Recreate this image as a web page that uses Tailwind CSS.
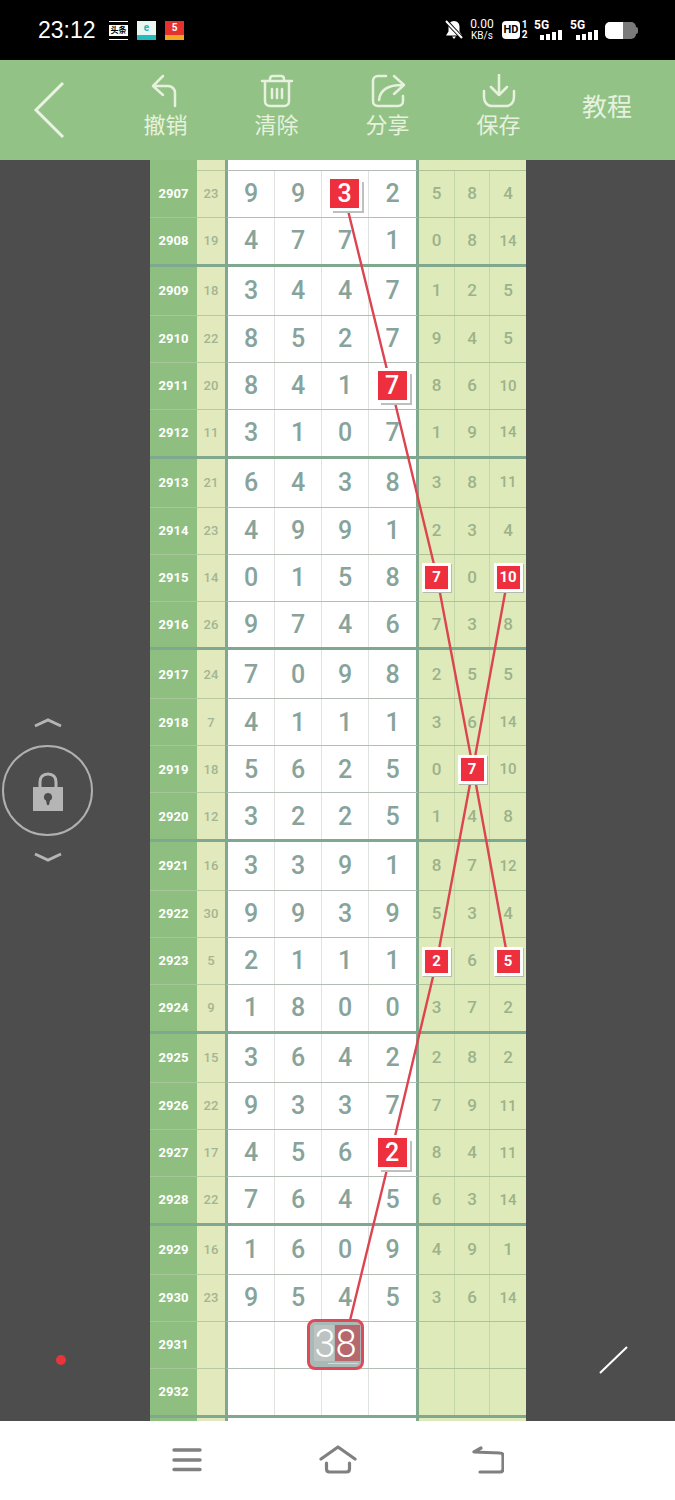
<!DOCTYPE html>
<html lang="zh">
<head>
  <meta charset="UTF-8">
  <meta name="viewport" content="width=device-width, initial-scale=1.0">
  <title>走势图</title>
  <script src="https://cdn.jsdelivr.net/npm/@tailwindcss/browser@4"></script>
</head>
<body class="bg-[#4d4d4d] font-['Roboto','Noto_Sans_CJK_SC',sans-serif]">
<div class="w-[675px] h-[1500px] flex flex-col overflow-hidden">

  <!-- Status bar -->
  <div class="h-[60px] bg-black flex items-center text-white shrink-0 pl-[38px] pr-[37px]">
    <span class="text-[23px] leading-none w-[71px] font-['Liberation_Sans',sans-serif]">23:12</span>
    <div class="flex gap-[9px]">
      <div class="w-[19px] h-[19px] border-y border-white flex items-center justify-center">
        <span class="w-full h-[11px] bg-white text-black text-[8px] leading-[11px] text-center font-bold">头条</span>
      </div>
      <div class="w-[19px] h-[19px] bg-[#e8f6f4] flex flex-col justify-between">
        <span class="text-[#25b5b5] text-[10px] leading-[14px] text-center font-bold">e</span>
        <span class="h-[5px] bg-[#25bcc0]"></span>
      </div>
      <div class="w-[19px] h-[19px] bg-[#e5322f] flex flex-col justify-between">
        <span class="text-white text-[10px] leading-[14px] text-center font-bold">5</span>
        <span class="h-[5px] bg-[#f5a623]"></span>
      </div>
    </div>
    <div class="ml-auto flex items-center">
      <svg width="20" height="20" viewBox="0 0 20 20" fill="#fff" class="mr-[6px]">
        <path d="M10 1c-3.500 0-5.500 2.800-5.500 5.500v5L2 15.500h16l-2.500-4v-5C15.500 3.800 13.500 1 10 1zM8 16.500h4L10 19z"/>
        <path d="M2 1l16 17" stroke="#000" stroke-width="4"/>
        <path d="M2 1l16 17" stroke="#fff" stroke-width="2"/>
      </svg>
      <div class="flex flex-col items-center leading-[11px] w-[24px] mr-[8px]">
        <span class="text-[12px]">0.00</span>
        <span class="text-[10px]">KB/s</span>
      </div>
      <span class="w-[18px] h-[18px] bg-white rounded-[4px] text-black text-[11px] font-bold leading-[18px] text-center">HD</span>
      <div class="flex flex-col items-center text-[10px] leading-[10px] font-bold w-[9px] mr-[5px]">
        <span>1</span><span>2</span>
      </div>
      <div class="relative w-[28px] h-[20px] mr-[8px]">
        <span class="absolute left-0 top-0 text-[12px] leading-[11px] font-bold">5G</span>
        <div class="absolute right-0 bottom-0 flex items-end gap-[2px]">
          <i class="w-[4px] h-[5px] bg-white"></i><i class="w-[4px] h-[6px] bg-white"></i><i class="w-[4px] h-[8px] bg-white"></i><i class="w-[4px] h-[10px] bg-white"></i>
        </div>
      </div>
      <div class="relative w-[28px] h-[20px] mr-[7px]">
        <span class="absolute left-0 top-0 text-[12px] leading-[11px] font-bold">5G</span>
        <div class="absolute right-0 bottom-0 flex items-end gap-[2px]">
          <i class="w-[4px] h-[5px] bg-white"></i><i class="w-[4px] h-[6px] bg-white"></i><i class="w-[4px] h-[8px] bg-white"></i><i class="w-[4px] h-[10px] bg-white"></i>
        </div>
      </div>
      <div class="flex items-center">
        <div class="w-[31px] h-[17px] rounded-[5px] bg-[#7a7a7a] overflow-hidden"><div class="w-[18px] h-full bg-white"></div></div>
        <div class="w-[2px] h-[7px] bg-[#7a7a7a] rounded-r-sm"></div>
      </div>
    </div>
  </div>

  <!-- Toolbar -->
  <div class="h-[100px] bg-[#92c285] text-[#e6f2dd] flex shrink-0 relative">
    <div class="w-[110px] pl-[33px] flex items-center">
      <svg width="34" height="60" viewBox="0 0 34 60" fill="none" stroke="#e9f4e2" stroke-width="3"><path d="M30 3L3 30l27 27"/></svg>
    </div>
    <div class="w-[111px] flex flex-col items-center pt-[14px]">
      <svg width="36" height="36" viewBox="0 0 36 36" fill="none" stroke="#e6f2dd" stroke-width="2.500" stroke-linecap="round" stroke-linejoin="round"><path d="M15 2L5 12l10 9M5 12h15c4 0 7 3 7 7v13"/></svg>
      <span class="text-[22px] leading-[26px] mt-[3px]">撤销</span>
    </div>
    <div class="w-[111px] flex flex-col items-center pt-[14px]">
      <svg width="36" height="36" viewBox="0 0 36 36" fill="none" stroke="#e6f2dd" stroke-width="2.500" stroke-linecap="round" stroke-linejoin="round"><path d="M3 7h30M11 7V5c0-2 1-3 3-3h8c2 0 3 1 3 3v2M6 7v20c0 3 2 5 5 5h14c3 0 5-2 5-5V7M13 15v9M18 15v9M23 15v9"/></svg>
      <span class="text-[22px] leading-[26px] mt-[3px]">清除</span>
    </div>
    <div class="w-[111px] flex flex-col items-center pt-[14px]">
      <svg width="36" height="36" viewBox="0 0 36 36" fill="none" stroke="#e6f2dd" stroke-width="2.500" stroke-linecap="round" stroke-linejoin="round"><path d="M16 2H8C5 2 3 4 3 7v20c0 3 2 5 5 5h20c3 0 5-2 5-5v-5M9 26c1-9 7-15 23-15M24 2l10 9-10 9"/></svg>
      <span class="text-[22px] leading-[26px] mt-[3px]">分享</span>
    </div>
    <div class="w-[111px] flex flex-col items-center pt-[14px]">
      <svg width="36" height="36" viewBox="0 0 36 36" fill="none" stroke="#e6f2dd" stroke-width="2.500" stroke-linecap="round" stroke-linejoin="round"><path d="M18 1v20M10 13l8 8 8-8M3 17v6c0 5 3 9 8 9h14c5 0 8-4 8-9v-6"/></svg>
      <span class="text-[22px] leading-[26px] mt-[3px]">保存</span>
    </div>
    <div class="flex-1 flex items-center pl-[28px] pb-[4px]">
      <span class="text-[25px]">教程</span>
    </div>
  </div>

  <!-- Chart area -->
  <div class="relative h-[1261px] shrink-0 overflow-hidden flex">
    <div class="w-[150px] shrink-0"></div>
    <div id="table" class="w-[376px] shrink-0 flex flex-col"></div>

    <!-- Connecting lines over the table -->
    <svg class="absolute inset-0 z-10 pointer-events-none" width="675" height="1261" viewBox="0 160 675 1261" fill="none" stroke="#dc4450" stroke-width="2.400">
      <path d="M344 194L391 386L437 577L473 768L508 960"/>
      <path d="M508 577L473 768L437 960L391 1153L344 1345"/>
    </svg>

    <!-- Side controls -->
    <div class="absolute left-0 top-[557px] w-[95px] flex flex-col items-center">
      <svg width="30" height="12" viewBox="0 0 30 12" fill="none" stroke="#b5b5b5" stroke-width="3"><path d="M2 9l13-6 13 6"/></svg>
      <div class="w-[91px] h-[91px] mt-[16px] rounded-full border-2 border-[#b0b0b0] flex items-center justify-center">
        <svg width="30" height="40" viewBox="0 0 30 40" class="mt-[3px]">
          <path d="M7 17V10c0-5 3-8 8-8s8 3 8 8v7" fill="none" stroke="#b5b5b5" stroke-width="3"/>
          <path d="M0 15h30v24H0z" fill="#b5b5b5"/>
          <path d="M15 21a4 4 0 0 1 2 7.500L16 33h-2l-1-4.500A4 4 0 0 1 15 21z" fill="#4d4d4d"/>
        </svg>
      </div>
      <svg width="30" height="12" viewBox="0 0 30 12" fill="none" stroke="#b5b5b5" stroke-width="3" class="mt-[15px]"><path d="M2 3l13 6 13-6"/></svg>
    </div>
    <span class="absolute left-[56px] top-[1195px] w-[10px] h-[10px] rounded-full bg-[#e8353b]"></span>
    <svg class="absolute left-[598px] top-[1185px]" width="32" height="30" viewBox="0 0 32 30" fill="none" stroke="#fff" stroke-width="2"><path d="M2 28L29 2"/></svg>
  </div>

  <!-- Navigation bar -->
  <div class="flex-1 bg-white relative flex items-center pb-[2px]">
    <div class="w-[338px] flex justify-center pl-[36px]">
      <svg width="30" height="24" viewBox="0 0 30 24" fill="none" stroke="#808080" stroke-width="3.400" stroke-linecap="round"><path d="M2 2h26M2 12h26M2 21.500h26"/></svg>
    </div>
    <svg class="-ml-[19px]" width="38" height="30" viewBox="0 0 38 30" fill="none" stroke="#808080" stroke-width="3.200" stroke-linecap="round" stroke-linejoin="round"><path d="M2 14L19 2l17 12M7.500 18v6c0 2 1 3 3 3h17c2 0 3-1 3-3v-6"/></svg>
    <svg class="ml-[115px]" width="32" height="28" viewBox="0 0 32 28" fill="none" stroke="#808080" stroke-width="3.200" stroke-linecap="round" stroke-linejoin="round"><path d="M9 2L2 6l26 1c2 0 3 1 3 3v13c0 2-1 3-3 3H8"/></svg>
  </div>
</div>

<script>
  // id, sum, four main digits, three right digits
  const data = [
    [2907,23,9,9,3,2,5,8,4],[2908,19,4,7,7,1,0,8,14],
    [2909,18,3,4,4,7,1,2,5],[2910,22,8,5,2,7,9,4,5],[2911,20,8,4,1,7,8,6,10],[2912,11,3,1,0,7,1,9,14],
    [2913,21,6,4,3,8,3,8,11],[2914,23,4,9,9,1,2,3,4],[2915,14,0,1,5,8,7,0,10],[2916,26,9,7,4,6,7,3,8],
    [2917,24,7,0,9,8,2,5,5],[2918,7,4,1,1,1,3,6,14],[2919,18,5,6,2,5,0,7,10],[2920,12,3,2,2,5,1,4,8],
    [2921,16,3,3,9,1,8,7,12],[2922,30,9,9,3,9,5,3,4],[2923,5,2,1,1,1,2,6,5],[2924,9,1,8,0,0,3,7,2],
    [2925,15,3,6,4,2,2,8,2],[2926,22,9,3,3,7,7,9,11],[2927,17,4,5,6,2,8,4,11],[2928,22,7,6,4,5,6,3,14],
    [2929,16,1,6,0,9,4,9,1],[2930,23,9,5,4,5,3,6,14],
    [2931],[2932]
  ];
  // marked cells, by id and cell index (0-3 main, 4-6 right)
  const marks = {2907:[2],2911:[3],2915:[4,6],2919:[5],2923:[4,6],2927:[3]};

  const rowH = ['h-[49px]','h-[47px]','h-[47px]','h-[48.8px]'];
  const rightW = ['w-[36px]','w-[35px]','w-[36px]'];
  const thin = {
    id: 'border-b border-[#a5c79a]',
    sum: 'border-b border-[#b9c9a0]',
    main: 'border-b border-[#b4bcb6]',
    right: 'border-b border-[#afc396]'
  };
  const thick = 'border-b-[3px] border-[#7fa88f]';

  const mainBadge = v => `<span class="relative z-20 w-[29px] h-[29px] -mt-[1px] -ml-[1px] flex items-center justify-center bg-[#ee2f3d] shadow-[0_0_0_3px_#fff,4px_4px_0_1px_#bcc0be] text-white text-[25px] leading-none">${v}</span>`;
  const rightBadge = v => `<span class="relative z-20 w-[23px] h-[23px] flex items-center justify-center bg-[#ee2f3d] shadow-[0_0_0_3px_#fff,1px_1px_0_3px_#b5bab0] text-white text-[15px] font-bold leading-none">${v}</span>`;

  function buildRow(d, i) {
    // a group is four rows; the view opens on its third row (2907)
    const pos = (i + 2) % 4;
    const last = pos === 3;
    const b = k => last ? thick : thin[k];
    const hasData = d.length > 1;
    const m = marks[d[0]] || [];
    const val = j => hasData ? d[j + 2] : '';
    let main = '', right = '';
    for (let j = 0; j < 4; j++) {
      main += `<div class="w-[47px] flex items-center justify-center text-[#87a39b] text-[25px] font-medium border-r border-[#dfe3df] last:border-r-0">${m.includes(j) ? mainBadge(val(j)) : val(j)}</div>`;
    }
    for (let j = 4; j < 7; j++) {
      const big = val(j) >= 10;
      right += `<div class="${rightW[j - 4]} flex items-center justify-center border-r border-[#c5d6a8] last:border-r-0 ${big ? 'text-[15px]' : 'text-[17px]'} font-medium text-[#9cb28a]">${m.includes(j) ? rightBadge(val(j)) : val(j)}</div>`;
    }
    return `<div class="flex shrink-0 ${rowH[pos]}">
      <div class="w-[47px] bg-[#8fbf80] flex items-center justify-center text-white text-[13px] font-bold ${b('id')}">${d[0]}</div>
      <div class="w-[28px] bg-[#e2e9bd] flex items-center justify-center text-[#a3b592] text-[13px] font-medium ${b('sum')}">${hasData ? d[1] : ''}</div>
      <div class="w-[194px] bg-white border-x-[3px] border-x-[#7fa88f] flex ${b('main')}">${main}</div>
      <div class="w-[107px] bg-[#deeab9] flex ${b('right')}">${right}</div>
    </div>`;
  }

  const stub = `<div class="flex shrink-0 h-[11px]">
    <div class="w-[47px] bg-[#8fbf80]"></div>
    <div class="w-[28px] bg-[#e2e9bd] ${thin.sum}"></div>
    <div class="w-[194px] bg-white border-x-[3px] border-x-[#7fa88f] ${thin.main}"></div>
    <div class="w-[107px] bg-[#deeab9] ${thin.right}"></div>
  </div>`;
  const tail = `<div class="flex shrink-0 h-[8px]">
    <div class="w-[47px] bg-[#8fbf80]"></div>
    <div class="w-[28px] bg-[#e2e9bd]"></div>
    <div class="w-[194px] bg-white border-x-[3px] border-x-[#7fa88f]"></div>
    <div class="w-[107px] bg-[#deeab9]"></div>
  </div>`;

  document.getElementById('table').innerHTML = stub + data.map(buildRow).join('') + tail;
</script>

<!-- Pending total, sits over row 2931 -->
<div class="absolute left-[307px] top-[1319px] z-20 w-[57px] h-[51px] rounded-[8px] border-[3px] border-[#dd4a5c] bg-[#a7bab5] overflow-hidden flex items-center justify-center">
  <div class="absolute left-[4px] top-[3px] w-[20px] h-[36px] bg-[#bcc3c0]"></div>
  <div class="absolute right-[1px] top-[3px] w-[25px] h-[36px] bg-[#b5696f]"></div>
  <div class="absolute right-[3px] bottom-[3px] w-[30px] h-[1px] bg-[#d5dcda]"></div>
  <span class="relative -mt-[1px] text-white text-[38px] font-light leading-none">38</span>
</div>
</body>
</html>
